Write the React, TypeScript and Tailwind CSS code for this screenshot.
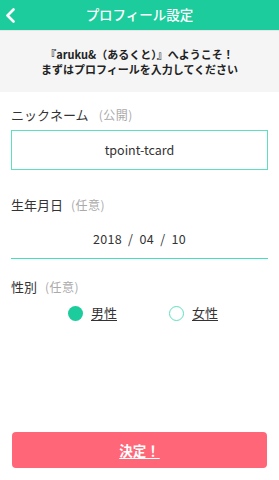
import React from "react";

export default function App() {
  const font = { fontFamily: '"Noto Sans CJK JP", "Noto Sans", sans-serif' };
  return (
    <div style={font} className="w-[279px] min-h-[480px] flex flex-col bg-white text-[#333]">
      <div className="relative h-[30px] bg-[#1ccc9c] flex items-center justify-center">
        <svg className="absolute left-[5px] top-[8px]" width="11" height="15" viewBox="0 0 11 15">
          <polyline points="8.5,1.5 2.5,7.5 8.5,13.5" fill="none" stroke="white" strokeWidth="2.6" strokeLinecap="round" strokeLinejoin="round" />
        </svg>
        <span className="text-white text-[13.5px] font-medium leading-none">プロフィール設定</span>
      </div>
      <div className="h-[62px] bg-[#f5f5f5] border-t border-[#e6e6e6] flex flex-col items-center justify-center text-[11px] font-bold leading-[14.5px] text-[#222]">
        <div>『aruku&amp;（あるくと）』へようこそ！</div>
        <div>まずはプロフィールを入力してください</div>
      </div>
      <div className="px-[11px] flex flex-col">
        <div className="mt-[13px] h-[20px] flex items-center text-[13px] text-[#333]">
          ニックネーム<span className="ml-[10px] text-[12px] text-[#aaa] tracking-[0.5px]">(公開)</span>
        </div>
        <div className="mt-[5px] h-[40px] border border-[#5ee0c0] flex items-center justify-center text-[12.5px] text-[#333]">
          tpoint-tcard
        </div>
        <div className="mt-[25px] h-[20px] flex items-center text-[13px] text-[#333]">
          生年月日<span className="ml-[8px] text-[12px] text-[#aaa] tracking-[0.5px]">(任意)</span>
        </div>
        <div className="pt-[14px] pb-[9px] border-b border-[#40e0c0] flex justify-center">
          <span className="h-[20px] flex items-center text-[12.5px] text-[#333] tracking-[0.3px]">2018&nbsp;&nbsp;/&nbsp;&nbsp;04&nbsp;&nbsp;/&nbsp;&nbsp;10</span>
        </div>
        <div className="mt-[18px] h-[20px] flex items-center text-[13px] text-[#333]">
          性別<span className="ml-[8px] text-[12px] text-[#aaa] tracking-[0.5px]">(任意)</span>
        </div>
        <div className="mt-[6px] h-[20px] flex items-center justify-center gap-[52px] pl-[7px]">
          <div className="flex items-center gap-[8px]">
            <span className="w-[15px] h-[15px] rounded-full bg-[#1ccc9c]" />
            <span className="text-[13px] underline underline-offset-2 text-[#333]">男性</span>
          </div>
          <div className="flex items-center gap-[8px]">
            <span className="w-[15px] h-[15px] rounded-full border border-[#5ee0c0]" />
            <span className="text-[13px] underline underline-offset-2 text-[#333]">女性</span>
          </div>
        </div>
      </div>
      <div className="mt-auto mb-[12px] mx-[12px] h-[36px] rounded-[4px] bg-[#ff6678] flex items-center justify-center">
        <span className="text-white text-[13.5px] font-bold underline underline-offset-2">決定！</span>
      </div>
    </div>
  );
}
